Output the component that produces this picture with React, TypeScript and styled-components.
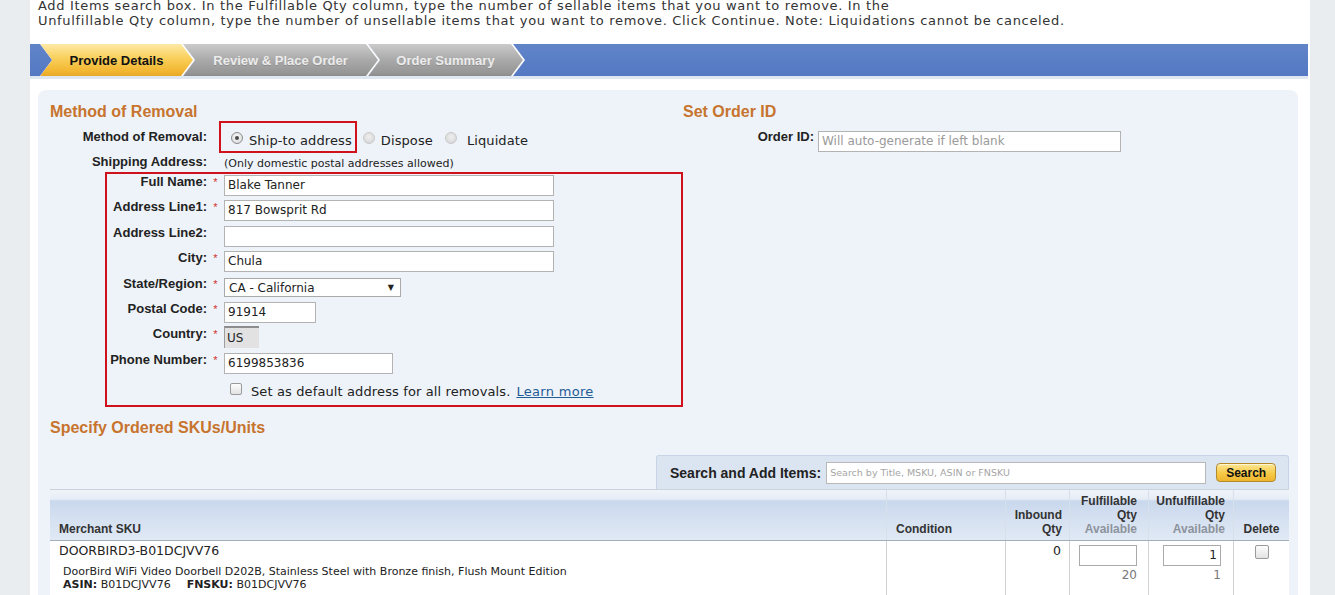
import React from "react"
import styled, { createGlobalStyle } from "styled-components"

const GlobalStyle = createGlobalStyle`
  html, body {
    margin: 0;
    padding: 0;
  }
  body {
    background: #eaedf0;
    font-family: "DejaVu Sans", Verdana, sans-serif;
    color: #222;
  }
  * {
    box-sizing: border-box;
  }
`

const ARIAL = `"Liberation Sans", Arial, sans-serif`
const RED = "#cf111c"
const ORANGE = "#c7742e"

const CHEVRON =
  "polygon(0 0, calc(100% - 12px) 0, 100% 50%, calc(100% - 12px) 100%, 0 100%, 12px 50%)"

const Page = styled.div`
  width: 1280px;
  height: 595px;
  margin-left: 30px;
  background: #fff;
  overflow: hidden;
`

const Intro = styled.div`
  margin-top: -2px;
  padding-left: 8px;
  font-size: 13px;
  line-height: 15px;
  letter-spacing: 0.68px;
  color: #333;

  span {
    display: block;
    white-space: nowrap;
  }
`

const StepBar = styled.div`
  display: flex;
  width: 1278px;
  height: 35px;
  margin-top: 16px;
  padding-left: 10px;
  background: linear-gradient(#6184c9, #5479c2);
  border-bottom: 3px solid #dfe7f3;
`

const Step = styled.div<{ $w: number }>`
  flex-shrink: 0;
  width: ${p => p.$w}px;
  height: 100%;
  background: #fff;
  clip-path: ${CHEVRON};

  & + & {
    margin-left: -12px;
  }
`

const StepFill = styled.div<{ $active?: boolean }>`
  display: flex;
  align-items: center;
  justify-content: center;
  width: calc(100% - 2px);
  height: 100%;
  padding: 0 12px;
  clip-path: ${CHEVRON};
  background: ${p =>
    p.$active
      ? "linear-gradient(#fde9a6, #f9cf5a 45%, #f2b631 85%, #e8a829)"
      : "linear-gradient(#cbcbcb, #a9a9a9 50%, #969696 90%, #8c8c8c)"};
  font: bold 13px ${ARIAL};
  color: ${p => (p.$active ? "#111" : "#ececec")};
  text-shadow: ${p => (p.$active ? "none" : "0 1px 0 rgba(0,0,0,0.15)")};
  white-space: nowrap;
`

const Panel = styled.section`
  width: 1260px;
  margin: 11px 0 0 8px;
  padding: 11px 9px 0 12px;
  background: #eef3f9;
  border-radius: 8px 8px 0 0;
  height: 520px;
`

const TopGrid = styled.div`
  display: grid;
  grid-template-columns: 633px 1fr;
`

const SectionTitle = styled.h2`
  margin: 0;
  padding-top: 1px;
  font: bold 16px/19px ${ARIAL};
  color: ${ORANGE};
  white-space: nowrap;
`

const Label = styled.span<{ $w: number }>`
  flex-shrink: 0;
  width: ${p => p.$w}px;
  text-align: right;
  font: bold 13px/16px ${ARIAL};
  color: #222;
  white-space: nowrap;
`

const MethodRow = styled.div`
  display: flex;
  align-items: center;
  height: 32px;
`

const RadioBox = styled.div`
  display: flex;
  align-items: center;
  height: 32px;
  margin-left: 12px;
  padding: 3px 3px 0 10px;
  border: 2px solid ${RED};
`

const RadioOption = styled.label<{ $gap: number }>`
  display: flex;
  align-items: center;
  gap: ${p => p.$gap}px;
  padding-top: 4px;
  font-size: 13px;
  letter-spacing: 0.1px;
  color: #222;
  white-space: nowrap;
`

const Radio = styled.span<{ $checked?: boolean }>`
  position: relative;
  flex-shrink: 0;
  width: 12px;
  height: 12px;
  margin-top: -5px;
  border-radius: 50%;
  border: 1px solid ${p => (p.$checked ? "#8c8c8c" : "#c9c9c9")};
  background: ${p =>
    p.$checked
      ? "radial-gradient(circle at 50% 40%, #fafafa, #d7d7d7)"
      : "radial-gradient(circle at 50% 40%, #efefef, #d2d2d2)"};

  &::after {
    content: "";
    position: absolute;
    inset: 3px;
    border-radius: 50%;
    background: ${p => (p.$checked ? "#4a4a4a" : "transparent")};
  }
`

const OtherRadios = styled.div`
  display: flex;
  align-items: center;
  gap: 12px;
  margin-left: 6px;
  padding-top: 3px;
`

const ShipRow = styled.div`
  display: flex;
  align-items: center;
  height: 18px;
`

const Note = styled.span`
  margin-left: 17px;
  padding-top: 3px;
  font-size: 11px;
  color: #222;
  white-space: nowrap;
`

const AddressBox = styled.div`
  width: 578px;
  height: 235px;
  margin: 1px 0 0 55px;
  border: 2px solid ${RED};
`

const FieldRow = styled.div`
  display: flex;
  align-items: flex-start;
  height: 25.4px;
`

const Req = styled.span`
  flex-shrink: 0;
  width: 17px;
  padding-top: 1px;
  text-align: center;
  font: 11px/14px ${ARIAL};
  color: #d0302f;
`

const TextInput = styled.div<{ $w: number; $muted?: boolean }>`
  width: ${p => p.$w}px;
  height: 21px;
  margin-top: 1px;
  padding: 0 3px;
  border: 1px solid #b3b3b3;
  background: #fff;
  font-size: 12px;
  line-height: 19px;
  color: ${p => (p.$muted ? "#9a9a9a" : "#222")};
  white-space: nowrap;
  overflow: hidden;
`

const SelectBox = styled.div`
  display: flex;
  align-items: center;
  justify-content: space-between;
  width: 177px;
  height: 19px;
  margin-top: 2.5px;
  padding: 0 6px 0 4px;
  border: 1px solid #a9a9a9;
  background: #fff;
  font-size: 12px;
  color: #222;

  i {
    font-style: normal;
    font-size: 8px;
  }
`

const Disabled = styled.div`
  width: 35px;
  height: 22px;
  padding: 3px 2px 0;
  border-top: 2px solid #8d8d8d;
  border-left: 1px solid #9d9d9d;
  background: #e2e2e2;
  font-size: 12px;
  color: #222;
`

const CheckRow = styled.div`
  display: flex;
  align-items: center;
  height: 24px;
  padding-left: 123px;
  font-size: 13px;
  white-space: nowrap;
`

const Check = styled.span<{ $size: number }>`
  flex-shrink: 0;
  width: ${p => p.$size}px;
  height: ${p => p.$size}px;
  border: 1px solid #9a9a9a;
  border-radius: 2px;
  background: linear-gradient(#fdfdfd, #e3e3e3);
`

const CheckText = styled.span`
  margin-left: 9px;
  padding-top: 4px;
  letter-spacing: 0.12px;
  color: #222;

  a {
    margin-left: 6px;
    letter-spacing: 0.3px;
    color: #1f5b95;
    text-decoration: underline;
  }
`

const OrderRow = styled.div`
  display: flex;
  align-items: flex-start;
  margin-top: 9px;
  gap: 4px;

  ${Label} {
    margin-top: -1px;
  }
`

const SkuTitle = styled(SectionTitle)`
  margin-top: 10px;
`

const SearchBar = styled.div`
  display: flex;
  align-items: center;
  width: 633px;
  height: 34px;
  margin: 18px 0 0 auto;
  padding-left: 13px;
  background: #dbe5f2;
  border: 1px solid #c6d4e6;
  border-bottom: none;
  border-radius: 3px 3px 0 0;
`

const SearchLabel = styled.span`
  font: bold 14px ${ARIAL};
  color: #222;
  white-space: nowrap;
`

const SearchInput = styled.div`
  width: 380px;
  height: 22px;
  margin-left: 5px;
  padding: 0 3px;
  border: 1px solid #b8b8b8;
  background: #fff;
  font-size: 9.5px;
  line-height: 20px;
  color: #a5a5a5;
  white-space: nowrap;
`

const SearchButton = styled.button`
  width: 60px;
  height: 19px;
  margin-left: 10px;
  padding: 0;
  border: 1px solid #b48a2a;
  border-radius: 4px;
  background: linear-gradient(#fde795, #f6c946 55%, #eeb52e);
  font: bold 12px ${ARIAL};
  color: #111;
  box-shadow: inset 0 1px 0 rgba(255, 255, 255, 0.6);
`

const COLS = "836px 119px 64px 79px 85px 56px"

const TableHead = styled.div`
  display: grid;
  grid-template-columns: ${COLS};
  height: 52px;
  border-top: 1px solid #c9d3e0;
  border-bottom: 1px solid #a3adbb;
  background: linear-gradient(
    #f0f4f9 0,
    #e6edf6 9px,
    #c9d8ed 11px,
    #d3dff0 50%,
    #e0e9f5 100%
  );
`

const HeadCell = styled.div<{ $align: "left" | "right" | "center"; $pad: number }>`
  display: flex;
  flex-direction: column;
  justify-content: flex-end;
  align-items: ${p =>
    p.$align === "left" ? "flex-start" : p.$align === "right" ? "flex-end" : "center"};
  padding: 0 ${p => (p.$align === "right" ? p.$pad : 0)}px 4px
    ${p => (p.$align === "left" ? p.$pad : 0)}px;
  text-align: ${p => p.$align};
  font: bold 12px/14px ${ARIAL};
  color: #333;
  white-space: nowrap;

  & + & {
    border-left: 1px solid #d6dfea;
  }

  small {
    font-size: 12px;
    color: #8d939c;
  }
`

const Row = styled.div`
  display: grid;
  grid-template-columns: ${COLS};
  height: 60px;
  background: #fff;
`

const Cell = styled.div<{ $align?: "left" | "right" | "center"; $pl?: number; $pr?: number }>`
  display: flex;
  flex-direction: column;
  align-items: ${p =>
    p.$align === "right" ? "flex-end" : p.$align === "center" ? "center" : "flex-start"};
  padding: 2px ${p => p.$pr ?? 0}px 0 ${p => p.$pl ?? 0}px;

  & + & {
    border-left: 1px solid #d3d3d3;
  }
`

const Sku = styled.div`
  font-size: 12.5px;
  line-height: 16px;
  color: #222;
`

const Desc = styled.div<{ $first?: boolean }>`
  margin-top: ${p => (p.$first ? 5.5 : 0)}px;
  padding-left: 4px;
  font-size: 11px;
  line-height: 13px;
  color: #222;
  white-space: nowrap;

  b + span {
    margin-right: 16px;
  }
`

const QtyInput = styled.div`
  width: 58px;
  height: 21px;
  margin-top: 2px;
  padding: 0 3px;
  border: 1px solid #aaa;
  background: #fff;
  text-align: right;
  font-size: 12px;
  line-height: 19px;
  color: #222;
`

const Avail = styled.div`
  margin-top: 1px;
  font-size: 12px;
  line-height: 16px;
  color: #777;
`

const DeleteCheck = styled(Check)`
  margin-top: 2px;
`

const fields = [
  { label: "Full Name:", req: true, value: "Blake Tanner", w: 330 },
  { label: "Address Line1:", req: true, value: "817 Bowsprit Rd", w: 330 },
  { label: "Address Line2:", req: false, value: "", w: 330 },
  { label: "City:", req: true, value: "Chula", w: 330 },
]

const App: React.FC = () => (
  <>
    <GlobalStyle />
    <Page>
      <Intro>
        <span>
          Add Items search box. In the Fulfillable Qty column, type the number of sellable items
          that you want to remove. In the
        </span>
        <span>
          Unfulfillable Qty column, type the number of unsellable items that you want to remove.
          Click Continue. Note: Liquidations cannot be canceled.
        </span>
      </Intro>

      <StepBar>
        <Step $w={155}>
          <StepFill $active>Provide Details</StepFill>
        </Step>
        <Step $w={197}>
          <StepFill>Review &amp; Place Order</StepFill>
        </Step>
        <Step $w={157}>
          <StepFill>Order Summary</StepFill>
        </Step>
      </StepBar>

      <Panel>
        <TopGrid>
          <div>
            <SectionTitle>Method of Removal</SectionTitle>
            <MethodRow>
              <Label $w={157}>Method of Removal:</Label>
              <RadioBox>
                <RadioOption $gap={6}>
                  <Radio $checked />
                  Ship-to address
                </RadioOption>
              </RadioBox>
              <OtherRadios>
                <RadioOption $gap={6}>
                  <Radio />
                  Dispose
                </RadioOption>
                <RadioOption $gap={10}>
                  <Radio />
                  Liquidate
                </RadioOption>
              </OtherRadios>
            </MethodRow>
            <ShipRow>
              <Label $w={157}>Shipping Address:</Label>
              <Note>(Only domestic postal addresses allowed)</Note>
            </ShipRow>

            <AddressBox>
              {fields.map(f => (
                <FieldRow key={f.label}>
                  <Label $w={100}>{f.label}</Label>
                  <Req>{f.req ? "*" : ""}</Req>
                  <TextInput $w={f.w}>{f.value}</TextInput>
                </FieldRow>
              ))}
              <FieldRow>
                <Label $w={100}>State/Region:</Label>
                <Req>*</Req>
                <SelectBox>
                  CA - California <i>▼</i>
                </SelectBox>
              </FieldRow>
              <FieldRow>
                <Label $w={100}>Postal Code:</Label>
                <Req>*</Req>
                <TextInput $w={92}>91914</TextInput>
              </FieldRow>
              <FieldRow>
                <Label $w={100}>Country:</Label>
                <Req>*</Req>
                <Disabled>US</Disabled>
              </FieldRow>
              <FieldRow>
                <Label $w={100}>Phone Number:</Label>
                <Req>*</Req>
                <TextInput $w={169}>6199853836</TextInput>
              </FieldRow>
              <CheckRow>
                <Check $size={12} />
                <CheckText>
                  Set as default address for all removals.
                  <a>Learn more</a>
                </CheckText>
              </CheckRow>
            </AddressBox>
          </div>

          <div>
            <SectionTitle>Set Order ID</SectionTitle>
            <OrderRow>
              <Label $w={131}>Order ID:</Label>
              <TextInput $w={303} $muted>
                Will auto-generate if left blank
              </TextInput>
            </OrderRow>
          </div>
        </TopGrid>

        <SkuTitle>Specify Ordered SKUs/Units</SkuTitle>

        <SearchBar>
          <SearchLabel>Search and Add Items:</SearchLabel>
          <SearchInput>Search by Title, MSKU, ASIN or FNSKU</SearchInput>
          <SearchButton>Search</SearchButton>
        </SearchBar>

        <TableHead>
          <HeadCell $align="left" $pad={9}>Merchant SKU</HeadCell>
          <HeadCell $align="left" $pad={9}>Condition</HeadCell>
          <HeadCell $align="right" $pad={7}>
            <span>Inbound</span>
            <span>Qty</span>
          </HeadCell>
          <HeadCell $align="right" $pad={11}>
            <span>Fulfillable</span>
            <span>Qty</span>
            <small>Available</small>
          </HeadCell>
          <HeadCell $align="right" $pad={8}>
            <span>Unfulfillable</span>
            <span>Qty</span>
            <small>Available</small>
          </HeadCell>
          <HeadCell $align="center" $pad={0}>Delete</HeadCell>
        </TableHead>

        <Row>
          <Cell $pl={9}>
            <Sku>DOORBIRD3-B01DCJVV76</Sku>
            <Desc $first>
              DoorBird WiFi Video Doorbell D202B, Stainless Steel with Bronze finish, Flush Mount
              Edition
            </Desc>
            <Desc>
              <b>ASIN:</b> <span>B01DCJVV76</span>
              <b>FNSKU:</b> B01DCJVV76
            </Desc>
          </Cell>
          <Cell />
          <Cell $align="right" $pr={8}>
            <Sku>0</Sku>
          </Cell>
          <Cell $align="right" $pr={11}>
            <QtyInput />
            <Avail>20</Avail>
          </Cell>
          <Cell $align="right" $pr={12}>
            <QtyInput>1</QtyInput>
            <Avail>1</Avail>
          </Cell>
          <Cell $align="center">
            <DeleteCheck $size={14} />
          </Cell>
        </Row>
      </Panel>
    </Page>
  </>
)

export default App
